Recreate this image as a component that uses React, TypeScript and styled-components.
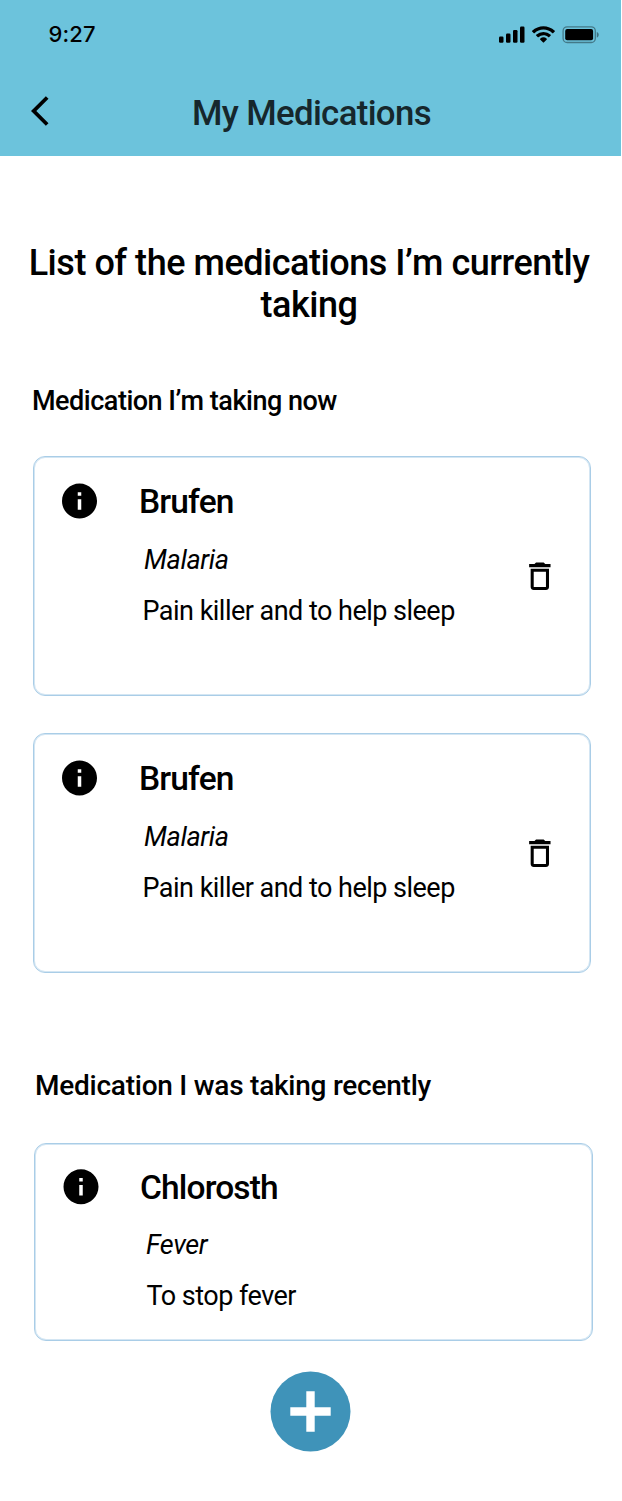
import React from "react";
import styled, { createGlobalStyle } from "styled-components";
import { MdArrowBackIos, MdInfo } from "react-icons/md";

const GlobalStyle = createGlobalStyle`
  *, *::before, *::after { box-sizing: border-box; }
  body {
    margin: 0;
    background: #fff;
    font-family: Roboto, "Liberation Sans", sans-serif;
    color: #000;
  }
  h1, h2, h3, p { margin: 0; }
  button { border: 0; padding: 0; background: none; color: inherit; font: inherit; }
`;

const Screen = styled.div`
  width: 621px;
  height: 1501px;
  overflow: hidden;
  background: #fff;
`;

const Header = styled.header`
  height: 156px;
  background: #6cc3dc;
`;

const StatusBar = styled.div`
  display: flex;
  align-items: center;
  justify-content: space-between;
  height: 69px;
  padding: 0 22px 0 48.5px;
`;

const Clock = styled.span`
  padding-bottom: 2px;
  font: 500 22px/26px Inter, sans-serif;
  letter-spacing: 0.1px;
`;

const NavBar = styled.div`
  display: grid;
  grid-template-columns: 70px 1fr 70px;
  align-items: center;
  height: 87px;
`;

const BackButton = styled.button`
  display: flex;
  margin: 0 0 3px 31px;
  svg { flex: none; width: 36px; height: 36px; }
`;

const Title = styled.h1`
  padding-left: 2px;
  font-size: 34.8px;
  font-weight: 500;
  line-height: 42px;
  letter-spacing: -0.66px;
  text-align: center;
  white-space: nowrap;
  color: #16272c;
`;

const Heading = styled.h2`
  margin-top: 86px;
  padding: 0 21px 0 18px;
  font-size: 36px;
  font-weight: 500;
  line-height: 42px;
  letter-spacing: -0.46px;
  text-align: center;
`;

const Section = styled.section<{ $top: number; $left: number }>`
  margin-top: ${(p) => p.$top}px;
  padding-left: ${(p) => p.$left}px;
`;

const SectionTitle = styled.h3<{ $size: number; $spacing: number; $indent: number }>`
  margin-left: ${(p) => p.$indent}px;
  font-size: ${(p) => p.$size}px;
  font-weight: 500;
  line-height: ${(p) => p.$size + 5}px;
  letter-spacing: ${(p) => p.$spacing}px;
  white-space: nowrap;
`;

const CardList = styled.div<{ $top: number }>`
  display: flex;
  flex-direction: column;
  gap: 37px;
  margin-top: ${(p) => p.$top}px;
`;

const Card = styled.article<{ $compact: boolean }>`
  display: flex;
  width: ${(p) => (p.$compact ? 559 : 558)}px;
  height: ${(p) => (p.$compact ? 198 : 240)}px;
  border: 1px solid #a9cde7;
  border-radius: 12px;
  box-shadow: inset 0 0 0 1px rgba(169, 205, 231, 0.5);
`;

const InfoIcon = styled(MdInfo)<{ $compact: boolean }>`
  flex: none;
  width: 42px;
  height: 42px;
  margin: ${(p) => (p.$compact ? "22px 0 0 25px" : "23px 0 0 24px")};
`;

const Details = styled.div<{ $compact: boolean }>`
  flex: 1;
  padding: ${(p) => (p.$compact ? "24px 0 0 38px" : "25px 0 0 39px")};
`;

const Name = styled.h3`
  font-size: 33.5px;
  font-weight: 500;
  line-height: 40px;
  letter-spacing: -0.85px;
`;

const Reason = styled.p<{ $compact: boolean }>`
  margin: ${(p) => (p.$compact ? "21px 0 0 6px" : "22px 0 0 5px")};
  font-size: 27px;
  font-style: italic;
  line-height: 32px;
  letter-spacing: -0.36px;
`;

const Purpose = styled.p<{ $compact: boolean }>`
  margin: 19px 0 0 ${(p) => (p.$compact ? 6.5 : 3.5)}px;
  font-size: 27px;
  line-height: 32px;
  letter-spacing: -0.52px;
  white-space: nowrap;
`;

const DeleteButton = styled.button`
  align-self: center;
  display: flex;
  margin-right: 32px;
  svg { width: 37px; height: 37px; }
`;

const Footer = styled.footer`
  display: flex;
  justify-content: center;
  margin-top: 30px;
`;

const AddButton = styled.button`
  display: flex;
  svg { width: 81px; height: 81px; }
`;

const StatusIcons = () => (
  <svg width="101" height="18" viewBox="498 26 101 18">
    <rect x="499" y="36.6" width="4.5" height="6.1" rx="1.2" />
    <rect x="506" y="33.6" width="4.5" height="9.1" rx="1.2" />
    <rect x="513" y="30.1" width="4.5" height="12.6" rx="1.2" />
    <rect x="520" y="26.5" width="4.5" height="16.2" rx="1.2" />
    <g transform="translate(532 26.2) scale(1.5)">
      <path d="M7.63 2.28c2.22 0 4.35.85 5.96 2.37.12.12.31.11.43 0l1.16-1.17a.31.31 0 0 0 0-.45C10.96-1.01 4.31-1.01.09 3.03a.31.31 0 0 0 0 .45l1.16 1.17c.12.12.31.12.43 0A8.65 8.65 0 0 1 7.63 2.28z" />
      <path d="M7.63 6.08c1.22 0 2.39.45 3.29 1.27.12.12.31.12.43-.01l1.16-1.18a.32.32 0 0 0-.01-.45 7.16 7.16 0 0 0-9.75 0 .32.32 0 0 0 0 .46l1.16 1.17c.12.12.31.12.43.01a4.88 4.88 0 0 1 3.29-1.27z" />
      <path d="M7.85 10.87l2.01-2.03a.32.32 0 0 0-.01-.46 3.4 3.4 0 0 0-4.43 0 .32.32 0 0 0-.01.46l2.01 2.03c.12.12.31.12.43 0z" />
    </g>
    <g>
      <rect x="563.1" y="26.9" width="32.2" height="15.6" rx="4" fill="none" stroke="#000" strokeOpacity=".38" strokeWidth="1.3" />
      <rect x="565.2" y="29" width="27.9" height="11.3" rx="2" />
      <path d="M596.8 32v5.6c1.2-.4 1.9-1.5 1.9-2.8s-.7-2.4-1.9-2.8z" fillOpacity=".42" />
    </g>
  </svg>
);

const TrashIcon = () => (
  <svg viewBox="-0.32 0 24.2 24.2">
    <path d="M6 19c0 1.1.9 2 2 2h8c1.1 0 2-.9 2-2V7H6v12zM8 9h8v10H8V9zm7.5-5l-1-1h-5l-1 1H5v2h14V4z" />
  </svg>
);

type Medication = { name: string; reason: string; purpose: string };

const MedicationCard = ({ item, compact = false }: { item: Medication; compact?: boolean }) => (
  <Card $compact={compact}>
    <InfoIcon $compact={compact} viewBox={compact ? "0 0.2 24 24" : "-0.29 0 24 24"} />
    <Details $compact={compact}>
      <Name>{item.name}</Name>
      <Reason $compact={compact}>{item.reason}</Reason>
      <Purpose $compact={compact}>{item.purpose}</Purpose>
    </Details>
    {!compact && (
      <DeleteButton aria-label="Delete">
        <TrashIcon />
      </DeleteButton>
    )}
  </Card>
);

const current: Medication[] = [
  { name: "Brufen", reason: "Malaria", purpose: "Pain killer and to help sleep" },
  { name: "Brufen", reason: "Malaria", purpose: "Pain killer and to help sleep" },
];

const recent: Medication[] = [{ name: "Chlorosth", reason: "Fever", purpose: "To stop fever" }];

export default function App() {
  return (
    <Screen>
      <GlobalStyle />
      <Header>
        <StatusBar>
          <Clock>9:27</Clock>
          <StatusIcons />
        </StatusBar>
        <NavBar>
          <BackButton aria-label="Back">
            <MdArrowBackIos />
          </BackButton>
          <Title>My Medications</Title>
        </NavBar>
      </Header>
      <Heading>List of the medications I’m currently taking</Heading>
      <Section $top={59} $left={33}>
        <SectionTitle $size={27} $spacing={-0.49} $indent={-1}>Medication I’m taking now</SectionTitle>
        <CardList $top={39}>
          {current.map((item, i) => (
            <MedicationCard key={i} item={item} />
          ))}
        </CardList>
      </Section>
      <Section $top={96} $left={34}>
        <SectionTitle $size={28} $spacing={-0.24} $indent={1}>Medication I was taking recently</SectionTitle>
        <CardList $top={41}>
          {recent.map((item, i) => (
            <MedicationCard key={i} item={item} compact />
          ))}
        </CardList>
      </Section>
      <Footer>
        <AddButton aria-label="Add medication">
          <svg viewBox="0 0 81 81">
            <circle cx="40.5" cy="40.5" r="40" fill="#3f93b9" />
            <path d="M36.3 20.3h8.4v16h16v8.4h-16v16h-8.4v-16h-16v-8.4h16z" fill="#fff" />
          </svg>
        </AddButton>
      </Footer>
    </Screen>
  );
}
